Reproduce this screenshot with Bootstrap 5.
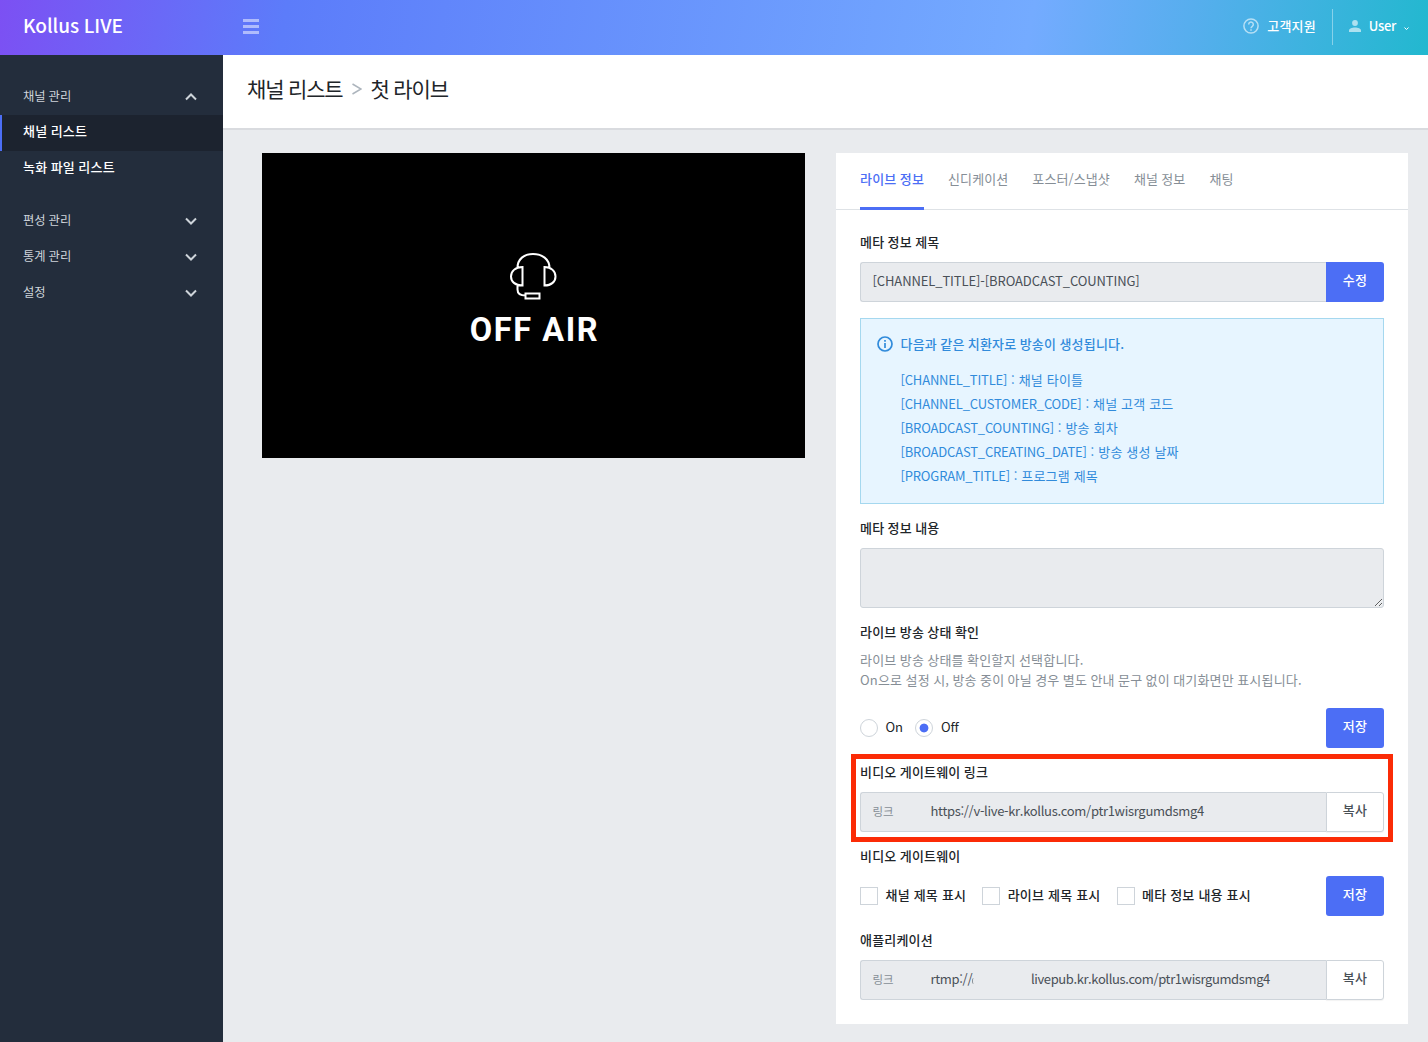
<!DOCTYPE html>
<html lang="ko">
<head>
<meta charset="utf-8">
<meta name="viewport" content="width=device-width, initial-scale=1">
<title>Kollus LIVE</title>
<link href="https://cdn.jsdelivr.net/npm/bootstrap@5.3.0/dist/css/bootstrap.min.css" rel="stylesheet">
<style>
:root { --kr: "Noto Sans CJK KR", sans-serif; --brand: #4c6ef5; }
body { font-family: var(--kr); font-size: 13px; line-height: 20px; letter-spacing: .18px; word-spacing: -.5px; color: #212529; background: #e9ebee; height: 1042px; overflow: hidden; }
.topbar { height: 55px; background: linear-gradient(100deg, #7c50f3 0, #5c7cfa 20%, #74abff 72%, #57aeee 83%, #22b8cf 100%); color: #fff; font-weight: 500; }
.brand { width: 243px; padding-left: 23px; font-size: 19px; letter-spacing: -.05px; padding-bottom: 6px; }
.burger { width: 16px; height: 15px; border-top: 3px solid #ffffff80; border-bottom: 3px solid #ffffff80; padding: 3px 0; margin-bottom: 3px; }
.burger::before { content: ""; display: block; height: 3px; background: #ffffff80; }
.tools { padding: 0 19px 1px 0; }
.tools .word { padding-bottom: 3px; }
.tools .icn { margin-bottom: 2px; }
.user-t { letter-spacing: -.3px; }
.user-c { margin-left: 8px; margin-top: 3px; }
.split { width: 1px; height: 36px; background: #ffffff66; }
.side { width: 223px; height: 987px; background: #232d3c; padding-top: 24px; }
.side a { display: flex; justify-content: space-between; align-items: center; height: 36px; padding: 0 26px 3px 23px; color: #ced4da; text-decoration: none; font-size: 12.3px; letter-spacing: 0; }
.side a.sub { color: #fff; font-weight: 500; font-size: 13px; letter-spacing: .2px; padding-bottom: 4px; }
.side a.current { background: #1c232f; box-shadow: inset 2px 0 var(--brand); }
.side svg { position: relative; top: 1px; }
.titlebar { height: 75px; background: #fff; border-bottom: 2px solid #d9dbdf; padding: 0 24px 6px; font-size: 21px; font-weight: 400; letter-spacing: -1.1px; word-spacing: -.3px; }
.titlebar svg { margin: 1px 9px 0; }
.stage { padding-top: 23px; }
.player { width: 543px; height: 305px; background: #000; color: #fff; margin-left: 39px; padding-top: 99px; }
.player svg { margin-right: 1px; }
.offair { font: 700 32.5px/40px Roboto, sans-serif; letter-spacing: 1.6px; margin: 9px 0 0 2px; word-spacing: 0; }
.panel { width: 572px; height: 871px; background: #fff; margin-left: 31px; }
.tabs { height: 57px; border-bottom: 1px solid #dee2e6; padding: 0 24px; gap: 24px; }
.tabs a { color: #868e96; text-decoration: none; height: 57px; padding-top: 16px; letter-spacing: .1px; }
.tabs a.on { color: var(--brand); font-weight: 500; border-bottom: 3px solid var(--brand); letter-spacing: .18px; }
.body-pad { padding: 8px 24px 24px; }
.lbl { display: block; padding: 14px 0 10px; font-weight: 500; height: 44px; }
.field { height: 40px; border: 1px solid #ced4da; background: #e9ebee; border-radius: 3px 0 0 3px; flex: 1; padding: 0 11.5px 2px; color: #495057; }
.field.flush { border-right: 0; }
.field .tag { width: 58px; font-size: 11.5px; color: #868e96; letter-spacing: 0; }
.meta-v { letter-spacing: -.1px; }
.url-v { letter-spacing: -.31px; white-space: nowrap; }
.url-v.tail { letter-spacing: -.39px; }
.host { width: 100.5px; }
.stub { width: 2px; height: 6px; display: inline-block; border-left: 1px solid #8b9197; border-radius: 2px 0 0 2px; }
.act { width: 58px; height: 40px; padding: 0 0 4px; font-size: 13px; font-weight: 500; border-radius: 3px; letter-spacing: inherit; }
.act.solid { background: var(--brand); color: #fff; border: 0; }
.act.line { background: #fff; border: 1px solid #ced4da; color: #495057; border-radius: 0 3px 3px 0; box-shadow: 0 1px 1px #0000000d; }
.note { border: 1px solid #a5d8ef; background: #e7f5ff; color: #318bdb; height: 186px; margin-top: 16px; padding: 15px 15.5px; }
.note .head { font-weight: 500; }
.note ul { line-height: 24px; margin: 14px 0 0 24px; word-spacing: 0; }
.note li b { font-weight: 400; letter-spacing: -.17px; }
.area { display: block; width: 100%; height: 60px; border: 1px solid #ced4da; border-radius: 3px; background: #e9ebee; resize: vertical; }
.desc { color: #868e96; margin: -2px 0 18px; }
.pick { width: 18px; height: 18px; border: 1px solid #ced4da; background: #fff; margin: 0 7.500px 0 0; appearance: none; }
.pick.round { border-radius: 50%; }
.pick.round:checked { background: radial-gradient(circle, var(--brand) 4px, #fff 4.800px); }
.opt { font-weight: 500; color: #212529; word-spacing: .1px; }
.opt + .opt { margin-left: 16px; }
.opt.near { margin-left: 12.500px; }
.opt span { padding-bottom: 2px; }
.opt .state { letter-spacing: -.1px; padding-bottom: 3px; font-weight: 400; }
.marked { position: relative; }
.marked::after { content: ""; position: absolute; left: -9px; right: -9px; top: 6px; bottom: -10px; border: 5px solid #fb2b06; pointer-events: none; }
</style>
</head>
<body>
<header class="topbar d-flex align-items-center">
  <div class="brand">Kollus LIVE</div>
  <div class="burger"></div>
  <div class="tools ms-auto d-flex align-items-center">
    <svg class="icn" width="16" height="16" viewBox="0 0 16 16" fill="none" stroke="#fff" stroke-opacity=".6" stroke-width="1.5"><circle cx="8" cy="8" r="7.1"/><path d="M5.700 6.400a2.300 2.300 0 1 1 3.600 1.900C8.300 9 8 9.300 8 10.200M8 11.300v1.400"/></svg>
    <span class="ms-2 word">고객지원</span>
    <span class="split mx-3"></span>
    <svg class="icn" width="12" height="12" viewBox="0 0 12 12" fill="#fff" fill-opacity=".6"><circle cx="6" cy="3" r="2.900"/><path d="M0 12v-1.500C0 8.500 3 7.500 6 7.500s6 1 6 3V12z"/></svg>
    <span class="ms-2 word user-t">User</span>
    <svg class="user-c" width="5" height="4" viewBox="0 0 5 4" fill="none" stroke="#fff"><path d="M.5.5l2 2 2-2"/></svg>
  </div>
</header>
<div class="d-flex">
  <nav class="side">
    <a href="#">채널 관리<svg width="12" height="8" viewBox="0 0 12 8" fill="none" stroke="#ced4da" stroke-width="2"><path d="M1 6.500l5-5 5 5"/></svg></a>
    <a href="#" class="sub current">채널 리스트</a>
    <a href="#" class="sub">녹화 파일 리스트</a>
    <a href="#" class="mt-3">편성 관리<svg width="12" height="8" viewBox="0 0 12 8" fill="none" stroke="#ced4da" stroke-width="2"><path d="M1 1.500l5 5 5-5"/></svg></a>
    <a href="#">통계 관리<svg width="12" height="8" viewBox="0 0 12 8" fill="none" stroke="#ced4da" stroke-width="2"><path d="M1 1.500l5 5 5-5"/></svg></a>
    <a href="#">설정<svg width="12" height="8" viewBox="0 0 12 8" fill="none" stroke="#ced4da" stroke-width="2"><path d="M1 1.500l5 5 5-5"/></svg></a>
  </nav>
  <main class="flex-grow-1">
    <h1 class="titlebar d-flex align-items-center m-0"><span>채널 리스트</span><svg width="10" height="12" viewBox="0 0 10 12" fill="none" stroke="#adb5bd" stroke-width="1.500"><path d="M.5 1l8.500 5-8.500 5"/></svg><span>첫 라이브</span></h1>
    <div class="stage d-flex align-items-start">
      <div class="player d-flex flex-column align-items-center">
        <svg width="48" height="49" viewBox="0 0 48 49" fill="none" stroke="#fff" stroke-width="2"><path d="M8.500 16C8.500 7 15 2 24 2s16.500 5 16.500 14M13.500 15v18.500C6 33.500 2 29.500 2 24.500S6 15 13.500 15zM35.500 15v18.500c7 0 11-4 11-9s-4-9.500-11-9.500zM8.500 33v4.500c0 4 3 6 8 6M16.500 41.500h14v5h-14z"/></svg>
        <div class="offair">OFF AIR</div>
      </div>
      <section class="panel">
        <nav class="tabs d-flex">
          <a href="#" class="on">라이브 정보</a><a href="#">신디케이션</a><a href="#">포스터/스냅샷</a><a href="#">채널 정보</a><a href="#">채팅</a>
        </nav>
        <div class="body-pad">
          <div class="lbl">메타 정보 제목</div>
          <div class="d-flex"><div class="field flush d-flex align-items-center"><span class="meta-v">[CHANNEL_TITLE]-[BROADCAST_COUNTING]</span></div><button class="btn act solid rounded-start-0">수정</button></div>
          <div class="note">
            <div class="head d-flex align-items-center"><svg class="me-2" width="16" height="16" viewBox="0 0 16 16" fill="none" stroke="#318bdb" stroke-width="1.700"><circle cx="8" cy="8" r="7"/><path d="M8 7v5M8 4v1.700"/></svg><span>다음과 같은 치환자로 방송이 생성됩니다.</span></div>
            <ul class="list-unstyled">
              <li><b>[CHANNEL_TITLE]</b> : 채널 타이틀</li>
              <li><b>[CHANNEL_CUSTOMER_CODE]</b> : 채널 고객 코드</li>
              <li><b>[BROADCAST_COUNTING]</b> : 방송 회차</li>
              <li><b>[BROADCAST_CREATING_DATE]</b> : 방송 생성 날짜</li>
              <li><b>[PROGRAM_TITLE]</b> : 프로그램 제목</li>
            </ul>
          </div>
          <div class="lbl">메타 정보 내용</div>
          <textarea class="area"></textarea>
          <div class="lbl">라이브 방송 상태 확인</div>
          <p class="desc">라이브 방송 상태를 확인할지 선택합니다.<br>On으로 설정 시, 방송 중이 아닐 경우 별도 안내 문구 없이 대기화면만 표시됩니다.</p>
          <div class="d-flex align-items-center">
            <label class="opt d-flex align-items-center"><input class="pick round" type="radio" name="s"><span class="state">On</span></label>
            <label class="opt near d-flex align-items-center"><input class="pick round" type="radio" name="s" checked><span class="state">Off</span></label>
            <button class="btn act solid ms-auto">저장</button>
          </div>
          <div class="marked">
            <div class="lbl">비디오 게이트웨이 링크</div>
            <div class="d-flex"><div class="field flush d-flex align-items-center"><span class="tag">링크</span><span class="url-v">https://v-live-kr.kollus.com/ptr1wisrgumdsmg4</span></div><button class="btn act line">복사</button></div>
          </div>
          <div class="lbl">비디오 게이트웨이</div>
          <div class="d-flex align-items-center">
            <label class="opt d-flex align-items-center"><input class="pick" type="checkbox"><span>채널 제목 표시</span></label>
            <label class="opt d-flex align-items-center"><input class="pick" type="checkbox"><span>라이브 제목 표시</span></label>
            <label class="opt d-flex align-items-center"><input class="pick" type="checkbox"><span>메타 정보 내용 표시</span></label>
            <button class="btn act solid ms-auto">저장</button>
          </div>
          <div class="lbl">애플리케이션</div>
          <div class="d-flex"><div class="field flush d-flex align-items-center"><span class="tag">링크</span><span class="url-v host">rtmp://<i class="stub"></i></span><span class="url-v tail">livepub.kr.kollus.com/ptr1wisrgumdsmg4</span></div><button class="btn act line">복사</button></div>
        </div>
      </section>
    </div>
  </main>
</div>
<script src="https://cdn.jsdelivr.net/npm/bootstrap@5.3.0/dist/js/bootstrap.bundle.min.js"></script>
</body>
</html>
